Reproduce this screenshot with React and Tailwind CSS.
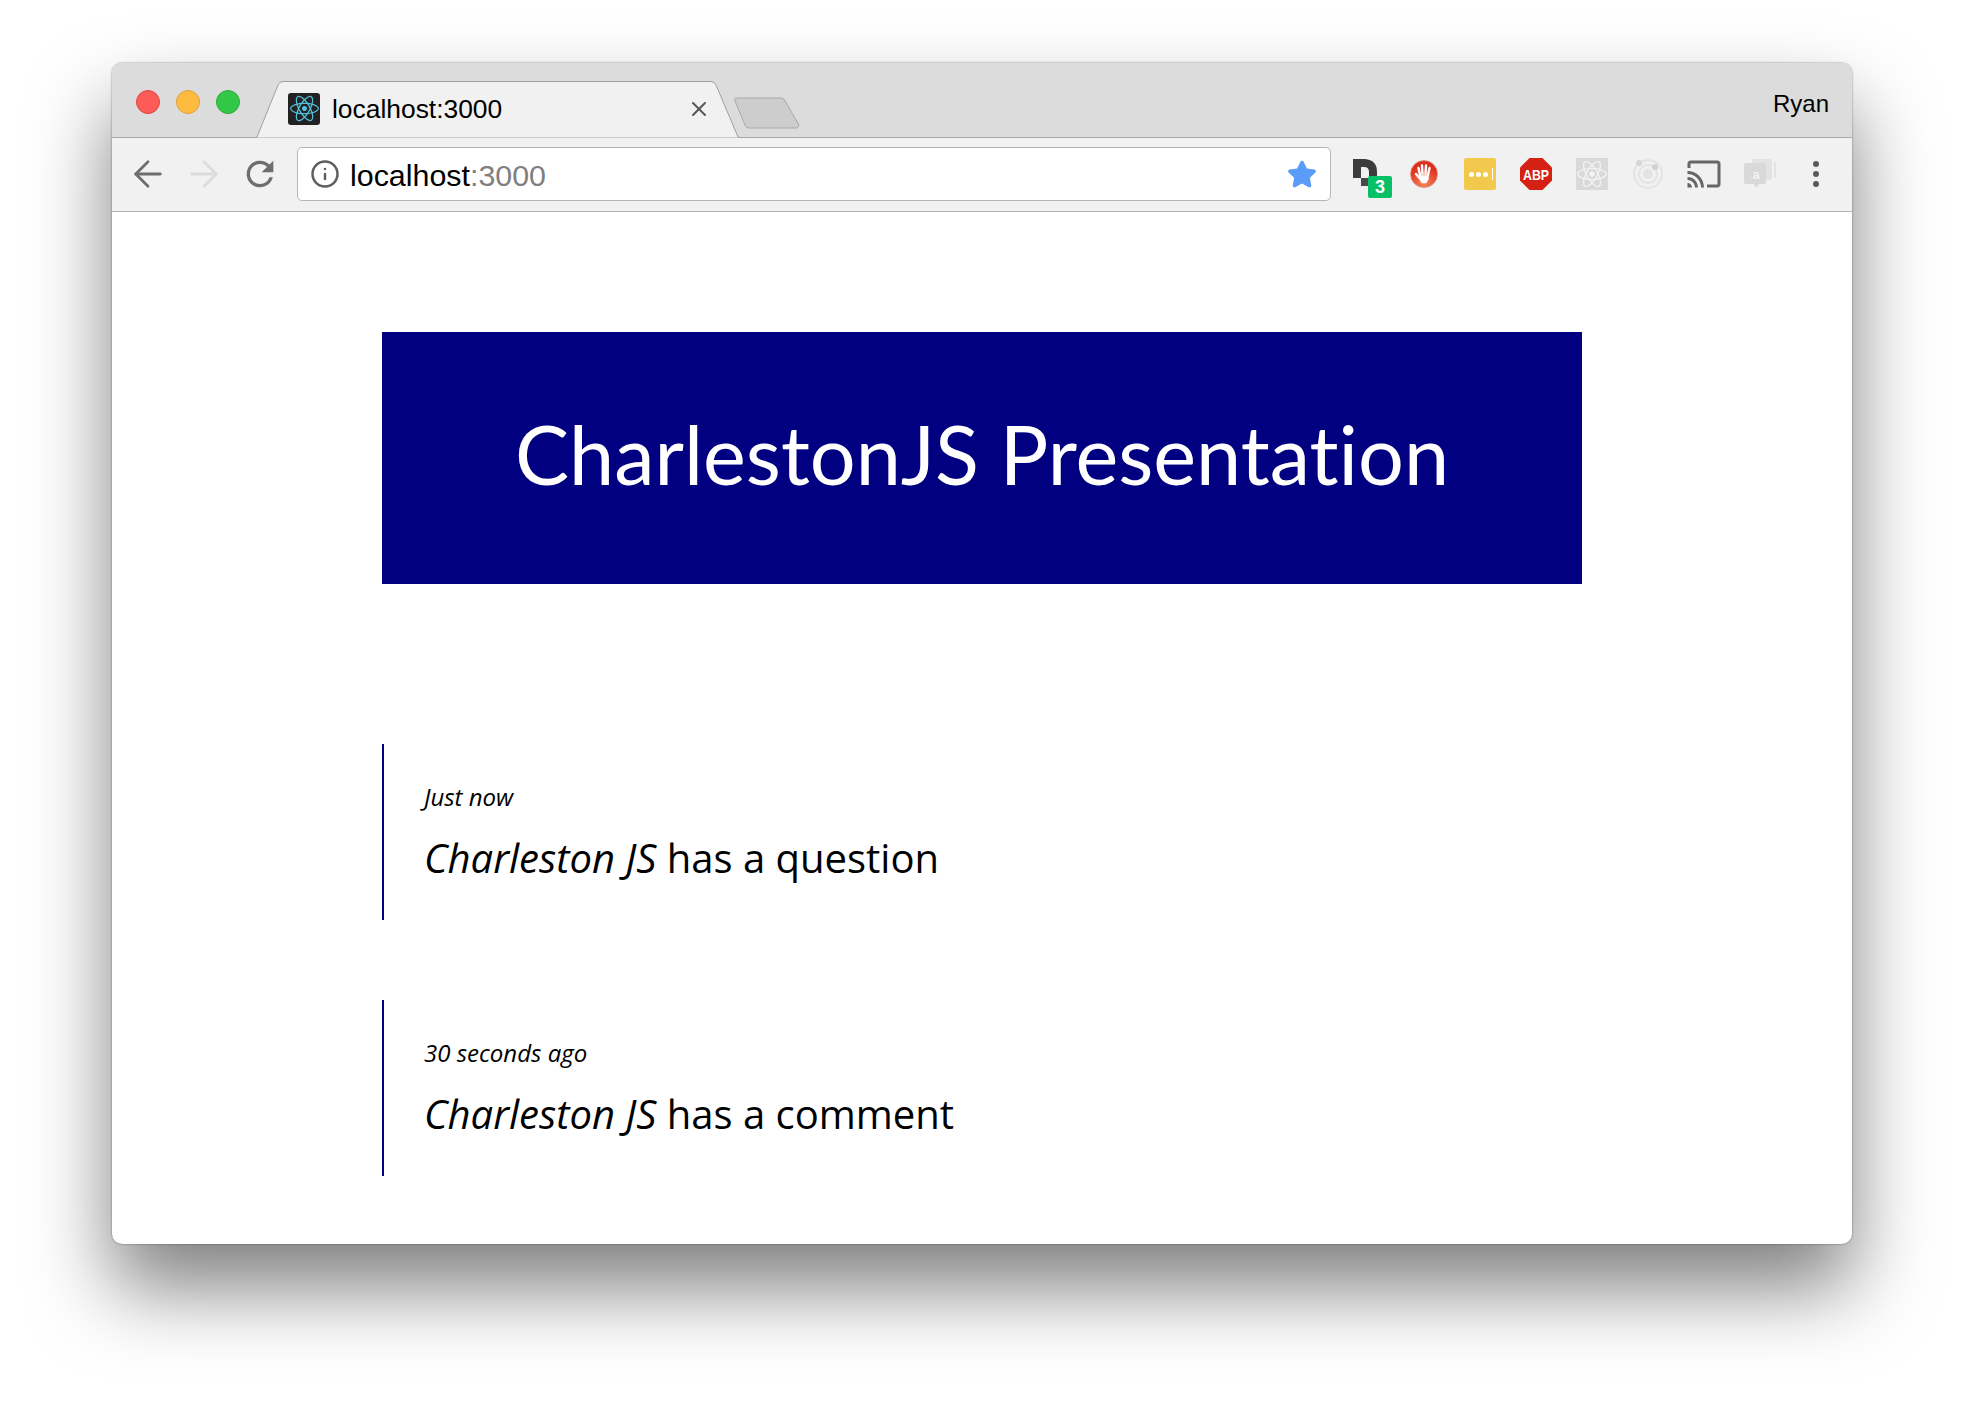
import { ArrowLeft, ArrowRight, Info, X } from 'lucide-react'
import { FaReact, FaStar } from 'react-icons/fa'
import { MdCast, MdRefresh } from 'react-icons/md'

const events = [
  { time: 'Just now', action: 'has a question' },
  { time: '30 seconds ago', action: 'has a comment' },
]

function TabBar() {
  return (
    <div className="flex h-[75px] border-b border-[#a9a9a9] bg-[#dcdcdc] pl-6">
      {/* Traffic lights */}
      <div className="flex gap-4 pt-[27px]">
        <div className="h-6 w-6 rounded-full border border-[#e2463f] bg-[#fc5b57]" />
        <div className="h-6 w-6 rounded-full border border-[#e1a33a] bg-[#fdbc40]" />
        <div className="h-6 w-6 rounded-full border border-[#2bac3a] bg-[#33c748]" />
      </div>

      {/* Active tab */}
      <div className="relative z-10 ml-4 mt-[18px] flex h-[57px] w-[484px] items-center pl-8">
        <svg className="absolute inset-0" width="484" height="57" viewBox="0 0 484 57">
          <path d="M0 56.5 L1 56 L22 4 Q23.500 .5 27 .5 L455 .5 Q458.500 .5 460 4 L482 56 L484 56.500 Z" fill="#f1f1f1" />
          <path d="M0 56.500 L1 56 L22 4 Q23.500 .5 27 .5 L455 .5 Q458.500 .5 460 4 L482 56 L484 56.500" fill="none" stroke="#a0a0a0" />
        </svg>
        <div className="relative -mt-[2px] flex h-8 w-8 shrink-0 items-center justify-center rounded-[3px] bg-[#222222]">
          <FaReact size={29} color="#53c1de" />
        </div>
        <span className="relative ml-3 font-['Liberation_Sans',sans-serif] text-[26.400px] leading-none text-black">localhost:3000</span>
        <X className="absolute left-[431px] top-[16px] text-[#555555]" size={24} strokeWidth={2} />
      </div>

      {/* New tab button */}
      <svg className="-ml-[6px] mt-[34px] shrink-0" width="66" height="32" viewBox="0 0 66 32">
        <path d="M1.500 1 H47 Q50 1 51 4 L64.500 27 Q65.500 31 62 31 H15 Q12 31 11 28 L1 4 Q0 1 1.500 1 Z" fill="#cdcdcd" stroke="#a8a8a8" />
      </svg>

      <span className="ml-auto pr-[23px] pt-[27px] font-['Liberation_Sans',sans-serif] text-2xl leading-7 text-black">Ryan</span>
    </div>
  )
}

function NavButton({ children }) {
  return <div className="flex w-14 items-center justify-center">{children}</div>
}

function ExtIcon({ children }) {
  return <div className="relative flex h-10 w-14 items-center justify-center">{children}</div>
}

function Extensions() {
  return (
    <div className="ml-[9px] flex items-center">
      <ExtIcon>
        <svg width="26" height="30" viewBox="0 0 26 30" className="-ml-[6px] -mt-[2px]">
          <path d="M1 1 H13 Q25 2 25 14 V24 H17 V14 Q17 9 12 9 H9 V20 H1 Z" fill="#3c3c3c" />
          <path d="M9 20 H17 V28 H9 Z" fill="#4a4a4a" />
        </svg>
        <div className="absolute left-[28px] top-[22px] flex h-[22px] w-6 items-center justify-center rounded-[2px] bg-[#06c167] font-['Liberation_Sans',sans-serif] text-[18px] font-bold leading-none text-white">3</div>
      </ExtIcon>
      <ExtIcon>
        <div className="flex h-7 w-7 items-center justify-center rounded-full border border-[#e28a77] bg-[radial-gradient(circle_at_50%_85%,#f58a5c,#e0301e_65%,#c9301f)]">
          <svg width="20" height="22" viewBox="0 0 20 22" fill="none" stroke="#ffffff" strokeLinecap="round" strokeWidth="2.400">
            <path d="M6 12 L4.500 5" />
            <path d="M8.500 11 L8 2.500" />
            <path d="M11.500 11 L12 2.500" />
            <path d="M14 12 L15.500 5" />
            <path d="M5.500 15 L2 11" />
            <path d="M6 13 H14 V16 L12 19.500 H8 L6 16 Z" fill="#ffffff" strokeWidth="1.500" strokeLinejoin="round" />
          </svg>
        </div>
      </ExtIcon>
      <ExtIcon>
        <div className="flex h-8 w-8 items-center justify-center gap-[2px] rounded-[2px] bg-[#f2c94c] pl-[2px]">
          <div className="h-[5px] w-[5px] rounded-full bg-white" />
          <div className="h-[5px] w-[5px] rounded-full bg-white" />
          <div className="h-[5px] w-[5px] rounded-full bg-white" />
          <div className="ml-[2px] h-[12px] w-px bg-white" />
        </div>
      </ExtIcon>
      <ExtIcon>
        <svg width="32" height="32" viewBox="0 0 32 32">
          <path d="M9.500 0 H22.500 L32 9.500 V22.500 L22.500 32 H9.500 L0 22.500 V9.500 Z" fill="#d42114" />
          <text x="16" y="21.500" textAnchor="middle" fontFamily="Liberation Sans, sans-serif" fontWeight="700" fontSize="14" textLength="26" lengthAdjust="spacingAndGlyphs" fill="#ffffff">ABP</text>
        </svg>
      </ExtIcon>
      <ExtIcon>
        <div className="flex h-8 w-8 items-center justify-center bg-[#d9d9d9]">
          <FaReact size={30} color="#f4f4f4" />
        </div>
      </ExtIcon>
      <ExtIcon>
        <svg width="32" height="32" viewBox="0 0 32 32" fill="none">
          <circle cx="16" cy="16" r="14" stroke="#e3e3e3" strokeWidth="2" />
          <circle cx="16" cy="16" r="9" stroke="#e3e3e3" strokeWidth="2" />
          <circle cx="16" cy="16" r="5" fill="#e3e3e3" />
          <circle cx="7" cy="5" r="3" fill="#d6d6d6" />
          <circle cx="23" cy="9" r="3" fill="#d0d0d0" />
        </svg>
      </ExtIcon>
      <ExtIcon>
        <MdCast size={36} color="#666666" />
      </ExtIcon>
      <ExtIcon>
        <svg width="32" height="32" viewBox="0 0 32 32">
          <path d="M30 4 L32 3 V20 L30 19 Z" fill="#e3e3e3" />
          <path d="M8 1 H26 Q28 1 28 3 V20 Q28 22 26 22 H8 Z" fill="#e3e3e3" />
          <path d="M2 5 H20 Q22 5 22 7 V24 Q22 26 20 26 H15 L12 30 L10 26 H2 Q0 26 0 24 V7 Q0 5 2 5 Z" fill="#d9d9d9" />
          <text x="12" y="21" textAnchor="middle" fontFamily="Liberation Sans, sans-serif" fontWeight="700" fontSize="13" fill="#f4f4f4">a</text>
        </svg>
      </ExtIcon>
      <ExtIcon>
        <div className="flex flex-col gap-1">
          <div className="h-[6px] w-[6px] rounded-full bg-[#5a5a5a]" />
          <div className="h-[6px] w-[6px] rounded-full bg-[#5a5a5a]" />
          <div className="h-[6px] w-[6px] rounded-full bg-[#5a5a5a]" />
        </div>
      </ExtIcon>
    </div>
  )
}

function Toolbar() {
  return (
    <div className="flex h-[74px] items-center border-b border-[#b5b5b5] bg-[#f1f1f1] pb-px pl-2">
      <NavButton><ArrowLeft size={42} strokeWidth={1.600} color="#6e6e6e" /></NavButton>
      <NavButton><ArrowRight size={42} strokeWidth={1.600} color="#dcdcdc" /></NavButton>
      <NavButton><MdRefresh size={40} color="#6e6e6e" /></NavButton>

      {/* Omnibox */}
      <div className="ml-[9px] flex h-[54px] w-[1034px] items-center rounded-[5px] border border-[#b5b5b5] bg-white pl-[12px] pr-[13px]">
        <Info size={30} strokeWidth={2} color="#5f5f5f" />
        <span className="ml-[10px] pt-[2px] font-['Liberation_Sans',sans-serif] text-[30.400px] leading-none text-black">
          localhost<span className="text-[#7f7f7f]">:3000</span>
        </span>
        <FaStar size={30} color="#5a9cf8" className="ml-auto" />
      </div>

      <Extensions />
    </div>
  )
}

export default function App() {
  return (
    <div className="h-[1404px] w-full overflow-hidden bg-white pl-[112px] pt-[63px]">
      <div className="h-[1181px] w-[1740px] overflow-hidden rounded-[10px] bg-white shadow-[0_44px_80px_rgba(0,0,0,0.5),0_0_2px_rgba(0,0,0,0.5)]">
        <TabBar />
        <Toolbar />

        <div className="flex flex-col px-[270px] pt-[120px]">
          <h1 className="flex h-[252px] items-center justify-center bg-[#000080] pb-2 font-['Lato',sans-serif] text-[81px] font-normal text-white [font-variant-ligatures:none]">
            CharlestonJS Presentation
          </h1>

          <div className="mt-[160px] flex flex-col gap-20">
            {events.map(event => (
              <div key={event.time} className="flex h-[176px] flex-col justify-center border-l-2 border-[#000080] pl-10 pt-1 font-['Open_Sans',sans-serif] text-black">
                <p className="text-[24px] italic leading-8">{event.time}</p>
                <p className="mt-[15px] text-[40px] leading-[60px]">
                  <em>Charleston JS</em> {event.action}
                </p>
              </div>
            ))}
          </div>
        </div>
      </div>
    </div>
  )
}
